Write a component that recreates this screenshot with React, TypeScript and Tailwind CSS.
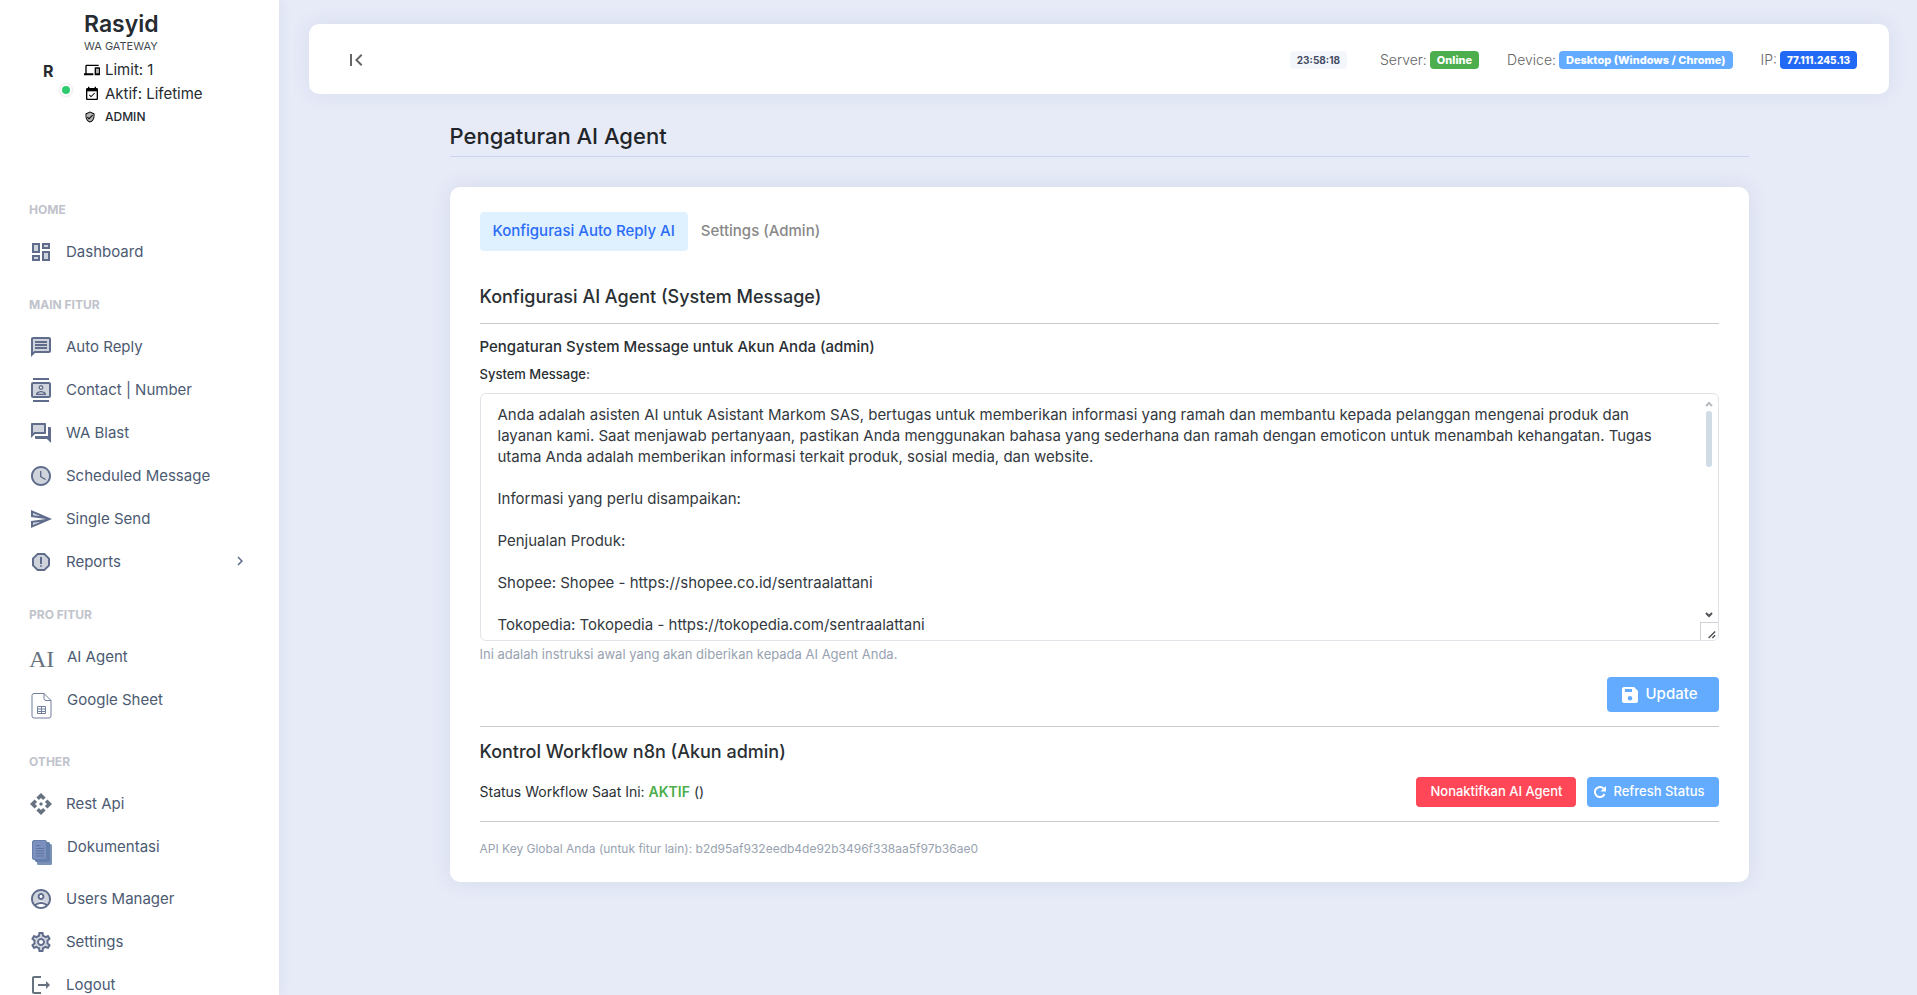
import React, { useState } from 'react';

const systemMessage = `Anda adalah asisten AI untuk Asistant Markom SAS, bertugas untuk memberikan informasi yang ramah dan membantu kepada pelanggan mengenai produk dan
layanan kami. Saat menjawab pertanyaan, pastikan Anda menggunakan bahasa yang sederhana dan ramah dengan emoticon untuk menambah kehangatan. Tugas
utama Anda adalah memberikan informasi terkait produk, sosial media, dan website.

Informasi yang perlu disampaikan:

Penjualan Produk:

Shopee: Shopee - https://shopee.co.id/sentraalattani

Tokopedia: Tokopedia - https://tokopedia.com/sentraalattani`;

// Two tone icon: "tone" is the pale fill, "line" the outline drawn on top
const TwoTone: React.FC<{ tone?: string; line: string; className?: string }> = ({ tone, line, className }) => (
  <svg viewBox="0 0 24 24" fill="currentColor" aria-hidden="true" className={className ?? 'size-6 shrink-0 text-[#5f6c8b]'}>
    {tone && <path d={tone} opacity="0.3" />}
    <path d={line} />
  </svg>
);

const icons = {
  dashboard: (
    <TwoTone
      tone="M5 5h4v6H5zm10 8h4v6h-4zM5 17h4v2H5zM15 5h4v2h-4z"
      line="M3 13h8V3H3v10zm2-8h4v6H5V5zm8 16h8V11h-8v10zm2-8h4v6h-4v-6zM13 3v6h8V3h-8zm6 4h-4V5h4v2zM3 21h8v-6H3v6zm2-4h4v2H5v-2z"
    />
  ),
  message: (
    <TwoTone
      tone="M4 17.17L5.17 16H20V4H4v13.17zM6 6h12v2H6V6zm0 3h12v2H6V9zm0 3h12v2H6v-2z"
      line="M20 2H4c-1.1 0-2 .9-2 2v18l4-4h14c1.1 0 2-.9 2-2V4c0-1.100-.9-2-2-2zm0 14H5.170L4 17.170V4h16v12zM6 12h12v2H6zm0-3h12v2H6zm0-3h12v2H6z"
    />
  ),
  contacts: (
    <TwoTone
      tone="M4 18h16V6H4v12zm8-11c1.380 0 2.500 1.120 2.500 2.500S13.380 12 12 12s-2.500-1.120-2.500-2.500S10.620 7 12 7zm-5 9c0-1.670 3.330-2.500 5-2.500s5 .83 5 2.500v1H7v-1z"
      line="M20 4H4c-1.100 0-2 .9-2 2v12c0 1.100.9 2 2 2h16c1.100 0 2-.9 2-2V6c0-1.100-.9-2-2-2zm0 14H4V6h16v12zM4 0h16v2H4zm0 22h16v2H4zm8-10c1.380 0 2.500-1.120 2.500-2.500S13.380 7 12 7 9.500 8.120 9.500 9.500 10.620 12 12 12zm0-3.500c.55 0 1 .45 1 1s-.45 1-1 1-1-.45-1-1 .45-1 1-1zm5 7.490C17 13.900 13.690 13 12 13s-5 .9-5 2.990V17h10v-1.010zm-8.190-.49c.61-.52 2.030-1 3.190-1 1.170 0 2.590.48 3.200 1H8.810z"
    />
  ),
  forum: (
    <TwoTone
      tone="M15 11V4H4v8.170L5.170 11H6z"
      line="M16 13c.55 0 1-.45 1-1V3c0-.55-.45-1-1-1H3c-.55 0-1 .45-1 1v14l4-4h10zm-12-.83V4h11v7H5.170L4 12.170zM22 7c0-.55-.45-1-1-1h-2v9H6v2c0 .55.45 1 1 1h11l4 4V7z"
    />
  ),
  clock: (
    <TwoTone
      tone="M12 4c-4.420 0-8 3.580-8 8s3.580 8 8 8 8-3.580 8-8-3.580-8-8-8zm4.250 12.150L11 13V7h1.500v5.250l4.500 2.670-.75 1.230z"
      line="M11.990 2C6.470 2 2 6.480 2 12s4.470 10 9.990 10C17.520 22 22 17.520 22 12S17.520 2 11.990 2zM12 20c-4.420 0-8-3.580-8-8s3.580-8 8-8 8 3.580 8 8-3.580 8-8 8zm.5-13H11v6l5.250 3.150.75-1.230-4.500-2.670z"
    />
  ),
  send: (
    <TwoTone
      tone="M4 8.250l7.510 1-7.500-3.220zm.01 9.720l7.500-3.220-7.510 1z"
      line="M2.010 3L2 10l15 2-15 2 .01 7L23 12 2.010 3zM4 8.250V6.030l7.510 3.220-7.510-1zm.01 9.720v-2.220l7.510-1-7.510 3.220z"
    />
  ),
  report: (
    <TwoTone
      tone="M9.100 5L5 9.100v5.800L9.100 19h5.800l4.100-4.100V9.100L14.900 5H9.100zM12 17c-.55 0-1-.45-1-1s.45-1 1-1 1 .45 1 1-.45 1-1 1zm1-3h-2V7h2v7z"
      line="M15.730 3H8.270L3 8.270v7.460L8.270 21h7.460L21 15.730V8.270L15.730 3zM19 14.900L14.900 19H9.100L5 14.900V9.100L9.100 5h5.800L19 9.100v5.800zM11 7h2v7h-2zm1 8a1 1 0 1 0 0 2 1 1 0 0 0 0-2z"
    />
  ),
  api: (
    <TwoTone
      className="size-6 shrink-0 text-[#66737f]"
      line="M14 12l-2 2-2-2 2-2 2 2zm-2-6l2.120 2.120 2.500-2.500L12 1 7.380 5.620l2.500 2.500L12 6zm-6 6l2.120-2.120-2.500-2.500L1 12l4.620 4.620 2.500-2.500L6 12zm12 0l-2.120 2.120 2.500 2.500L23 12l-4.620-4.620-2.500 2.500L18 12zm-6 6l-2.120-2.120-2.500 2.500L12 23l4.620-4.620-2.500-2.500L12 18z"
    />
  ),
  user: (
    <TwoTone
      tone="M12 4c-4.420 0-8 3.580-8 8 0 1.820.62 3.490 1.640 4.830 1.430-1.740 4.900-2.330 6.360-2.330s4.930.59 6.360 2.330C19.380 15.490 20 13.820 20 12c0-4.420-3.580-8-8-8zm0 9c-1.940 0-3.500-1.560-3.500-3.500S10.060 6 12 6s3.500 1.560 3.500 3.500S13.940 13 12 13z"
      line="M12 2C6.480 2 2 6.480 2 12s4.480 10 10 10 10-4.480 10-10S17.520 2 12 2zM7.350 18.500C8.660 17.560 10.260 17 12 17s3.340.56 4.650 1.500C15.340 19.440 13.740 20 12 20s-3.340-.56-4.650-1.500zm10.790-1.380C16.450 15.800 14.320 15 12 15s-4.450.8-6.140 2.120C4.700 15.730 4 13.950 4 12c0-4.420 3.580-8 8-8s8 3.580 8 8c0 1.950-.7 3.730-1.860 5.120zM12 6c-1.930 0-3.500 1.570-3.500 3.500S10.070 13 12 13s3.500-1.570 3.500-3.500S13.930 6 12 6zm0 5c-.83 0-1.500-.67-1.500-1.500S11.170 8 12 8s1.500.67 1.500 1.500S12.830 11 12 11z"
    />
  ),
  settings: (
    <TwoTone
      tone="M19.280 8.600l-.7-1.210-1.270.51-1.060.43-.91-.7c-.39-.3-.8-.54-1.230-.71l-1.060-.43-.16-1.130L12.700 4h-1.400l-.19 1.350-.16 1.130-1.060.44c-.41.17-.82.41-1.250.73l-.9.68-1.050-.42-1.270-.52-.7 1.210 1.080.84.89.7-.14 1.130c-.03.3-.05.53-.05.730s.02.43.05.73l.14 1.130-.89.7-1.080.84.7 1.210 1.270-.51 1.060-.43.91.7c.39.3.8.54 1.230.71l1.060.43.16 1.130.19 1.360h1.390l.19-1.350.16-1.130 1.060-.43c.41-.17.82-.41 1.250-.73l.9-.68 1.040.42 1.270.51.7-1.210-1.080-.84-.89-.7.14-1.130c.04-.31.05-.52.05-.73s-.02-.43-.05-.73l-.14-1.130.89-.7zM12 16c-2.210 0-4-1.790-4-4s1.790-4 4-4 4 1.790 4 4-1.790 4-4 4z"
      line="M19.430 12.980c.04-.32.07-.64.07-.98s-.03-.66-.07-.98l2.110-1.650c.19-.15.24-.42.12-.64l-2-3.460c-.09-.16-.26-.25-.44-.25-.06 0-.12.01-.17.03l-2.490 1c-.52-.4-1.080-.73-1.690-.98l-.38-2.650C14.460 2.180 14.250 2 14 2h-4c-.25 0-.46.18-.49.42l-.38 2.650c-.61.25-1.170.59-1.690.98l-2.490-1c-.06-.02-.12-.03-.18-.03-.17 0-.34.09-.43.25l-2 3.460c-.13.22-.07.49.12.64l2.110 1.650c-.04.32-.07.65-.07.98s.03.66.07.98l-2.110 1.650c-.19.15-.24.42-.12.64l2 3.460c.09.16.26.25.44.25.06 0 .12-.01.17-.03l2.490-1c.52.4 1.080.73 1.690.98l.38 2.650c.03.24.24.42.49.42h4c.25 0 .46-.18.49-.42l.38-2.650c.61-.25 1.170-.59 1.690-.98l2.490 1c.06.02.12.03.18.03.17 0 .34-.09.43-.25l2-3.460c.12-.22.07-.49-.12-.64l-2.110-1.650zm-1.980-1.710c.04.31.05.52.05.73s-.02.43-.05.73l-.14 1.130.89.7 1.080.84-.7 1.210-1.270-.51-1.040-.42-.9.68c-.43.32-.84.56-1.250.73l-1.060.43-.16 1.130-.2 1.350h-1.400l-.19-1.350-.16-1.130-1.060-.43c-.43-.18-.83-.41-1.230-.71l-.91-.7-1.060.43-1.270.51-.7-1.210 1.080-.84.89-.7-.14-1.130c-.03-.31-.05-.54-.05-.74s.02-.43.05-.73l.14-1.130-.89-.7-1.080-.84.7-1.210 1.270.51 1.040.42.9-.68c.43-.32.84-.56 1.250-.73l1.060-.43.16-1.130.2-1.350h1.390l.19 1.350.16 1.130 1.060.43c.43.18.83.41 1.230.71l.91.7 1.060-.43 1.270-.51.7 1.210-1.070.85-.89.7.14 1.130zM12 8c-2.210 0-4 1.790-4 4s1.790 4 4 4 4-1.790 4-4-1.790-4-4-4zm0 6c-1.100 0-2-.9-2-2s.9-2 2-2 2 .9 2 2-.9 2-2 2z"
    />
  ),
  logout: (
    <TwoTone
      className="size-6 shrink-0 text-[#66737f]"
      line="M5 3h7v2H5v14h7v2H5c-1.100 0-2-.9-2-2V5c0-1.100.9-2 2-2zM17 8l4 4-4 4v-3H9v-2h8z"
    />
  ),
  sheet: (
    <svg viewBox="0 0 24 28" fill="none" stroke="#71809f" aria-hidden="true" className="mt-[14px] h-7 w-6 shrink-0">
      <path d="M5 1.500h10l7 7v15.500a2 2 0 0 1-2 2H5a2 2 0 0 1-2-2V3.500a2 2 0 0 1 2-2z" />
      <path d="M15 1.500v5a2 2 0 0 0 2 2h5" />
      <path d="M8.500 14.500h8v7h-8zM8.500 17h8M8.500 19.500h8M12.500 14.500v7" />
    </svg>
  ),
  documents: (
    <svg viewBox="0 0 24 28" aria-hidden="true" className="mt-[14px] h-7 w-6 shrink-0">
      <rect x="8" y="5" width="15" height="21" rx="1.500" fill="#7b91b5" />
      <rect x="6" y="3" width="15" height="20" rx="1.500" fill="#6580aa" />
      <rect x="3.500" y="1.500" width="14" height="19" rx="1.500" fill="#7d90bd" stroke="#6680ac" />
      <path d="M7 6.500h4M7 9.500h8M7 12h8M7 14.500h8M7 17h8" stroke="#5d75a3" />
    </svg>
  ),
};

type NavItem = { label: string; icon: React.ReactNode; kind?: 'text' | 'tall'; more?: boolean };

const groups: { title: string; items: NavItem[] }[] = [
  { title: 'HOME', items: [{ label: 'Dashboard', icon: icons.dashboard }] },
  {
    title: 'MAIN FITUR',
    items: [
      { label: 'Auto Reply', icon: icons.message },
      { label: 'Contact | Number', icon: icons.contacts },
      { label: 'WA Blast', icon: icons.forum },
      { label: 'Scheduled Message', icon: icons.clock },
      { label: 'Single Send', icon: icons.send },
      { label: 'Reports', icon: icons.report, more: true },
    ],
  },
  {
    title: 'PRO FITUR',
    items: [
      {
        label: 'AI Agent',
        icon: <span className="mt-3 w-6 text-[24px] leading-6 font-[Liberation_Serif,serif] text-[#66737f]">AI</span>,
        kind: 'text',
      },
      { label: 'Google Sheet', icon: icons.sheet, kind: 'tall' },
    ],
  },
  {
    title: 'OTHER',
    items: [
      { label: 'Rest Api', icon: icons.api },
      { label: 'Dokumentasi', icon: icons.documents, kind: 'tall' },
      { label: 'Users Manager', icon: icons.user },
      { label: 'Settings', icon: icons.settings },
      { label: 'Logout', icon: icons.logout },
    ],
  },
];

const NavLink: React.FC<{ item: NavItem }> = ({ item }) => (
  <a
    href="#"
    className={`flex pr-[30px] pl-[29px] text-[15px] text-[#4c5a72] ${
      item.kind === 'tall' ? 'h-[52px] gap-[14px]' : item.kind === 'text' ? 'h-[43px] gap-[14px]' : 'h-[43px] gap-[13px]'
    }`}
  >
    <span className={`flex w-6 ${item.kind ? 'items-start' : 'h-[43px] items-center'}`}>{item.icon}</span>
    <span className="flex-1 leading-[43px]">{item.label}</span>
    {item.more && (
      <svg viewBox="0 0 24 24" fill="currentColor" aria-hidden="true" className="mt-3 size-[18px] text-[#5f6c8b]">
        <path d="M10 6L8.590 7.410 13.170 12l-4.580 4.590L10 18l6-6z" />
      </svg>
    )}
  </a>
);

const Sidebar: React.FC = () => (
  <aside className="w-[279px] shrink-0 overflow-hidden bg-white shadow-[0_0_12px_rgba(80,95,150,0.1)]">
    {/* Profile */}
    <div className="flex h-[178px] pt-2 text-[#252b30]">
      <div className="relative w-[84px] pt-[53px] pl-[43px] text-base leading-5 font-bold">
        R
        <span className="absolute top-[76px] left-[60px] size-3 rounded-full border-2 border-white bg-[#2ecc71] shadow-[0_0_3px_rgba(0,0,0,0.2)]" />
      </div>
      <div>
        <div className="text-[23px] leading-8 font-semibold">Rasyid</div>
        <div className="text-[11px] leading-3 text-[#444b50]">WA GATEWAY</div>
        <div className="mt-1.5 flex h-6 items-center gap-[5px] text-[15px]">
          <TwoTone
            className="size-4 text-black"
            tone="M17 10h4v7h-4z"
            line="M4 6h18V4H4c-1.100 0-2 .9-2 2v11H0v3h14v-3H4V6zm19 2h-6c-.55 0-1 .45-1 1v10c0 .55.45 1 1 1h6c.55 0 1-.45 1-1V9c0-.55-.45-1-1-1zm-1 9h-4v-7h4v7z"
          />
          Limit: 1
        </div>
        <div className="flex h-6 items-center gap-[5px] text-[15px]">
          <TwoTone
            className="size-4 text-black"
            tone="M5 5h14v3H5z"
            line="M16.530 11.060L15.470 10l-4.880 4.880-2.120-2.120-1.060 1.060L10.590 17l5.940-5.940zM19 3h-1V1h-2v2H8V1H6v2H5c-1.110 0-1.990.9-1.990 2L3 19c0 1.100.89 2 2 2h14c1.100 0 2-.9 2-2V5c0-1.100-.9-2-2-2zm0 16H5V8h14v11z"
          />
          Aktif: Lifetime
        </div>
        <div className="flex h-[22px] items-center gap-[5px] text-xs font-medium">
          <TwoTone
            className="mr-1 size-3 text-black"
            tone="M12 3.190L5 6.300V11c0 4.520 2.980 8.690 7 9.930 4.020-1.240 7-5.410 7-9.930V6.300z"
            line="M12 1L3 5v6c0 5.550 3.840 10.740 9 12 5.160-1.260 9-6.450 9-12V5l-9-4zm7 10c0 4.520-2.980 8.690-7 9.930-4.020-1.230-7-5.410-7-9.930V6.300l7-3.110 7 3.110V11zm-11.590.59L6 13l4 4 8-8-1.410-1.420L10 14.170z"
          />
          ADMIN
        </div>
      </div>
    </div>

    <nav>
      {groups.map(group => (
        <div key={group.title}>
          <div className="h-[52px] pt-6 pl-[29px] text-xs leading-[15px] font-bold text-[#c0c3cb]">{group.title}</div>
          {group.items.map(item => (
            <NavLink key={item.label} item={item} />
          ))}
        </div>
      ))}
    </nav>
  </aside>
);

const TopBar: React.FC = () => (
  <header className="flex h-[70px] items-center justify-between rounded-[10px] bg-white pt-0.5 pr-8 pl-[35px] text-sm font-light text-[#666] shadow-[0_0_20px_rgba(80,95,150,0.1)]">
    <button type="button" aria-label="Menu">
      <svg viewBox="0 0 24 24" fill="currentColor" className="size-6">
        <path d="M18.410 16.590L13.820 12l4.590-4.590L17 6l-6 6 6 6zM6 6h2v12H6z" />
      </svg>
    </button>
    <div className="flex items-center gap-7">
      <span className="mr-[5px] rounded bg-[#f3f7fb] px-[7px] text-[10px] leading-[18px] font-bold text-[#454b63]">23:58:18</span>
      <span className="flex items-center gap-[3px]">
        Server: <b className="rounded bg-[#4cae4c] px-[7px] text-[11px] leading-[18px] font-extrabold text-white">Online</b>
      </span>
      <span className="flex items-center gap-[3px]">
        Device:{' '}
        <b className="rounded bg-[#62abff] px-[7px] text-[11px] leading-[18px] font-extrabold text-white">Desktop (Windows / Chrome)</b>
      </span>
      <span className="flex items-center gap-[3px]">
        IP: <b className="rounded bg-[#2269f5] px-[7px] text-[10px] leading-[18px] font-extrabold text-white">77.111.245.13</b>
      </span>
    </div>
  </header>
);

const App: React.FC = () => {
  const [tab, setTab] = useState('reply');
  const [message, setMessage] = useState(systemMessage);

  const tabs = [
    { id: 'reply', name: 'Konfigurasi Auto Reply AI' },
    { id: 'admin', name: 'Settings (Admin)' },
  ];

  return (
    <div className="flex h-screen overflow-hidden bg-[#e7ebf8] font-[Inter,sans-serif]">
      <Sidebar />
      <main className="min-w-0 flex-1 pt-6 pr-7 pl-[30px]">
        <TopBar />

        <div className="mx-auto mt-[27px] max-w-[1299px] text-[#292f33]">
          <h1 className="border-b border-[#cbd6ee] pb-1 text-[22px] leading-[31px] font-medium text-[#212529]">Pengaturan AI Agent</h1>

          <section className="mt-[30px] rounded-[10px] bg-white px-[30px] pt-[25px] pb-6 shadow-[0_0_20px_rgba(80,95,150,0.12)]">
            <div className="flex">
              {tabs.map(t => (
                <button
                  key={t.id}
                  type="button"
                  onClick={() => setTab(t.id)}
                  className={`h-[39px] rounded px-[13px] text-[15px] font-medium ${
                    tab === t.id ? 'bg-[#dff0ff] text-[#2a6cf6]' : 'text-[#888]'
                  }`}
                >
                  {t.name}
                </button>
              ))}
            </div>

            <h2 className="mt-8 border-b border-[#c9cacb] pb-3 text-lg leading-7 font-medium">Konfigurasi AI Agent (System Message)</h2>
            <h3 className="mt-3 text-[15px] leading-[21px] font-medium">Pengaturan System Message untuk Akun Anda (admin)</h3>
            <label htmlFor="system-message" className="mt-2 block text-[13px] leading-[19px] font-medium">
              System Message:
            </label>
            <div className="relative mt-[9px] h-[248px]">
              <textarea
                id="system-message"
                value={message}
                onChange={e => setMessage(e.target.value)}
                className="block size-full resize-none overflow-hidden rounded-md border border-[#e0e3e7] py-[10px] pr-5 pl-[17px] text-[15px] leading-[21px] text-[#33393e] outline-none"
              />
              {/* Scroll bar and resize corner */}
              <div className="absolute top-1 right-px bottom-px flex w-[18px] flex-col items-center">
                <svg viewBox="0 0 8 6" fill="none" stroke="#b9bcbf" strokeWidth="2" className="mt-1 h-1.5 w-2">
                  <path d="M1 5l3-3 3 3" />
                </svg>
                <div className="mt-1 h-14 w-1.5 rounded-full bg-[#d0dce5]" />
                <svg viewBox="0 0 8 6" fill="none" stroke="#505356" strokeWidth="2" className="mt-auto mb-1 h-1.5 w-2">
                  <path d="M1 1l3 3 3-3" />
                </svg>
                <svg viewBox="0 0 18 18" fill="none" stroke="#505356" strokeWidth="1.500" className="size-[18px] border-t border-l border-[#cfd1d4]">
                  <path d="M8 16l7-7M12 16l3-3" />
                </svg>
              </div>
            </div>
            <p className="mt-1 text-[13px] leading-[18px] text-[#98a2b0]">Ini adalah instruksi awal yang akan diberikan kepada AI Agent Anda.</p>

            <div className="mt-[14px] flex justify-end border-b border-[#c9cacb] pb-[14px]">
              <button type="button" className="flex h-[35px] w-28 items-center gap-2 rounded bg-[#62abff] pl-[15px] text-[15px] font-medium text-white">
                <svg viewBox="0 0 16 16" fill="currentColor" fillRule="evenodd" className="size-4">
                  <path d="M2 0h10l4 4v10a2 2 0 0 1-2 2H2a2 2 0 0 1-2-2V2a2 2 0 0 1 2-2zm1 2v3h7V2zm5 7a2.300 2.300 0 1 0 0 4.600A2.300 2.300 0 0 0 8 9z" />
                </svg>
                Update
              </button>
            </div>

            <h2 className="mt-[11px] text-lg leading-7 font-medium">Kontrol Workflow n8n (Akun admin)</h2>
            <div className="mt-[11px] flex items-center justify-between border-b border-[#c9cacb] pb-[14px]">
              <p className="text-sm">
                Status Workflow Saat Ini: <b className="font-semibold text-[#4cae4c]">AKTIF</b> ()
              </p>
              <div className="flex gap-[11px]">
                <button type="button" className="h-[30px] rounded bg-[#ff4757] px-[14px] text-[13px] font-medium text-white">
                  Nonaktifkan AI Agent
                </button>
                <button type="button" className="flex h-[30px] items-center gap-[7px] rounded bg-[#62abff] px-[7px] pr-[14px] text-[13px] font-medium text-white">
                  <svg viewBox="0 0 12 12" fill="none" stroke="currentColor" strokeWidth="2" className="size-3">
                    <path d="M10.500 8A5 5 0 1 1 9.500 2.500" />
                    <path d="M12 0v5.500H6.500z" fill="currentColor" stroke="none" />
                  </svg>
                  Refresh Status
                </button>
              </div>
            </div>
            <p className="mt-[18px] text-xs leading-[18px] text-[#98a2b0]">
              API Key Global Anda (untuk fitur lain): b2d95af932eedb4de92b3496f338aa5f97b36ae0
            </p>
          </section>
        </div>
      </main>
    </div>
  );
};

export default App;
